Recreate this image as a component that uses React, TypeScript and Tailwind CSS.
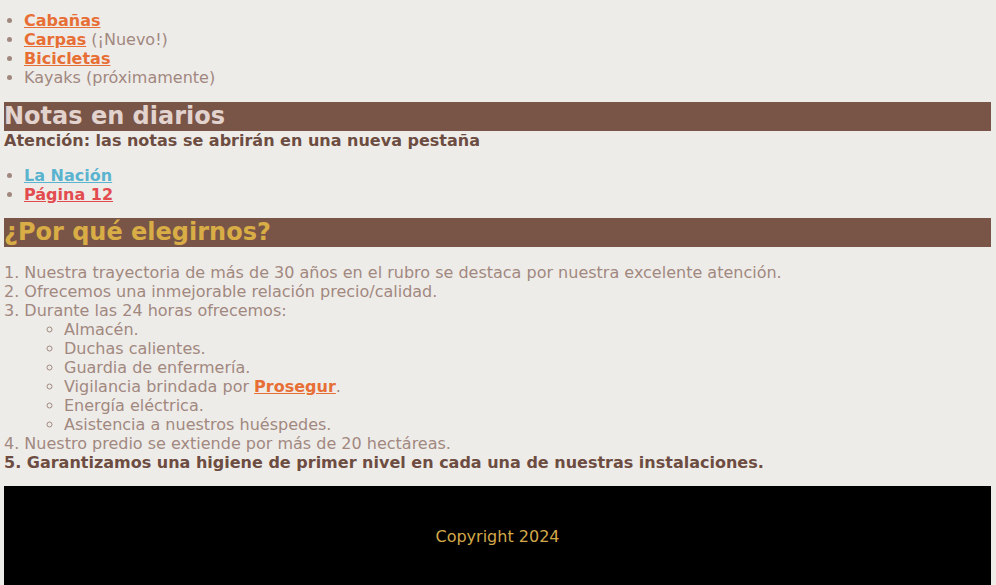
import React from "react";

export default function App() {
  const font = { fontFamily: 'Verdana, "DejaVu Sans", sans-serif' };
  return (
    <div className="bg-[#eeece9] min-h-[585px] pl-1 pr-[5px] pt-[11px] text-[16px] leading-[19px] text-[#a1887f]" style={font}>
      <ul className="list-disc pl-5 marker:text-[#a1887f]">
        <li><a href="#" className="font-bold underline text-[#e76f35]">Cabañas</a></li>
        <li><a href="#" className="font-bold underline text-[#e76f35]">Carpas</a> (¡Nuevo!)</li>
        <li><a href="#" className="font-bold underline text-[#e76f35]">Bicicletas</a></li>
        <li>Kayaks (próximamente)</li>
      </ul>
      <h2 className="mt-[15px] bg-[#795548] text-[24px] leading-[29px] font-bold text-[#e3d3ce]">Notas en diarios</h2>
      <p className="font-bold text-[#6d4c41] leading-[19px]">Atención: las notas se abrirán en una nueva pestaña</p>
      <ul className="mt-[16px] list-disc pl-5">
        <li><a href="#" className="font-bold underline text-[#5ab4cf]">La Nación</a></li>
        <li><a href="#" className="font-bold underline text-[#e34c4f]">Página 12</a></li>
      </ul>
      <h2 className="mt-[14px] bg-[#795548] text-[24px] leading-[29px] font-bold text-[#d9ad45]">¿Por qué elegirnos?</h2>
      <ol className="mt-[16px] list-decimal list-inside">
        <li>Nuestra trayectoria de más de 30 años en el rubro se destaca por nuestra excelente atención.</li>
        <li>Ofrecemos una inmejorable relación precio/calidad.</li>
        <li>
          Durante las 24 horas ofrecemos:
          <ul className="list-[circle] pl-[60px]">
            <li>Almacén.</li>
            <li>Duchas calientes.</li>
            <li>Guardia de enfermería.</li>
            <li>Vigilancia brindada por <a href="#" className="font-bold underline text-[#e76f35]">Prosegur</a>.</li>
            <li>Energía eléctrica.</li>
            <li>Asistencia a nuestros huéspedes.</li>
          </ul>
        </li>
        <li>Nuestro predio se extiende por más de 20 hectáreas.</li>
        <li className="font-bold text-[#6d4c41]">Garantizamos una higiene de primer nivel en cada una de nuestras instalaciones.</li>
      </ol>
      <footer className="mt-[14px] bg-black pt-[41px] pb-10 text-center text-[#d3a84a]">
        <p>Copyright 2024</p>
      </footer>
    </div>
  );
}
